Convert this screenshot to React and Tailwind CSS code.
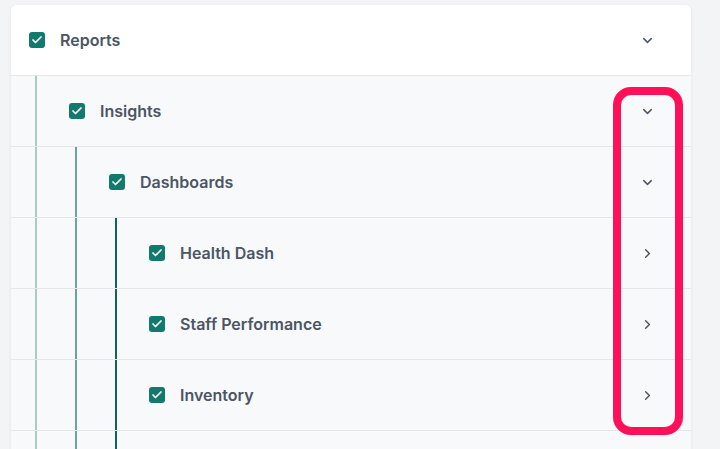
import { ChevronDown, ChevronRight, Check } from 'lucide-react';

const items = [
  { label: 'Reports', depth: 0, open: true },
  { label: 'Insights', depth: 1, open: true },
  { label: 'Dashboards', depth: 2, open: true },
  { label: 'Health Dash', depth: 3, open: false },
  { label: 'Staff Performance', depth: 3, open: false },
  { label: 'Inventory', depth: 3, open: false },
];

const lineColors = ['bg-[#a9cbc6]', 'bg-[#6fa49e]', 'bg-[#10625a]'];

function Guide({ level }) {
  return (
    <div className="relative w-10 h-full shrink-0">
      <div className={`absolute left-6 top-0 bottom-0 w-[2px] ${lineColors[level]}`}></div>
    </div>
  );
}

function Row({ item }) {
  return (
    <div className={`flex items-stretch h-[71px] border-b border-[#e5e7eb] ${item.depth === 0 ? 'bg-white' : 'bg-[#f8f9fb]'}`}>
      {Array.from({ length: item.depth }).map((_, i) => <Guide key={i} level={i} />)}
      <div className="flex flex-1 items-center pl-[18px] pr-[34px]">
        <span className="flex w-4 h-4 items-center justify-center rounded-[3px] bg-[#127a6d]">
          <Check size={12} strokeWidth={3.5} className="text-white" />
        </span>
        <span className="ml-[15px] text-[16px] leading-5 font-semibold text-[#4b5563]">{item.label}</span>
        <span className="ml-auto flex w-5 justify-center text-[#4b5563]">
          {item.open ? <ChevronDown size={15} strokeWidth={2.3} /> : <ChevronRight size={15} strokeWidth={2.3} />}
        </span>
      </div>
    </div>
  );
}

export default function App() {
  return (
    <div className="relative h-[449px] overflow-hidden bg-[#f3f4f6] pl-[11px] pt-[5px]" style={{ fontFamily: 'Inter, "Noto Sans", sans-serif' }}>
      <div className="w-[680px] overflow-hidden rounded-t-md bg-white shadow-[0_1px_4px_rgba(0,0,0,0.06)]">
        {items.map((it) => <Row key={it.label} item={it} />)}
        {/* next child row, cut off by the viewport */}
        <div className="flex h-[71px] bg-[#f8f9fb]">
          <Guide level={0} />
          <Guide level={1} />
          <Guide level={2} />
        </div>
      </div>
      <div className="absolute left-[613px] top-[87px] w-[70px] h-[348px] rounded-[18px] border-[8px] border-[#ff1058]"></div>
    </div>
  );
}
